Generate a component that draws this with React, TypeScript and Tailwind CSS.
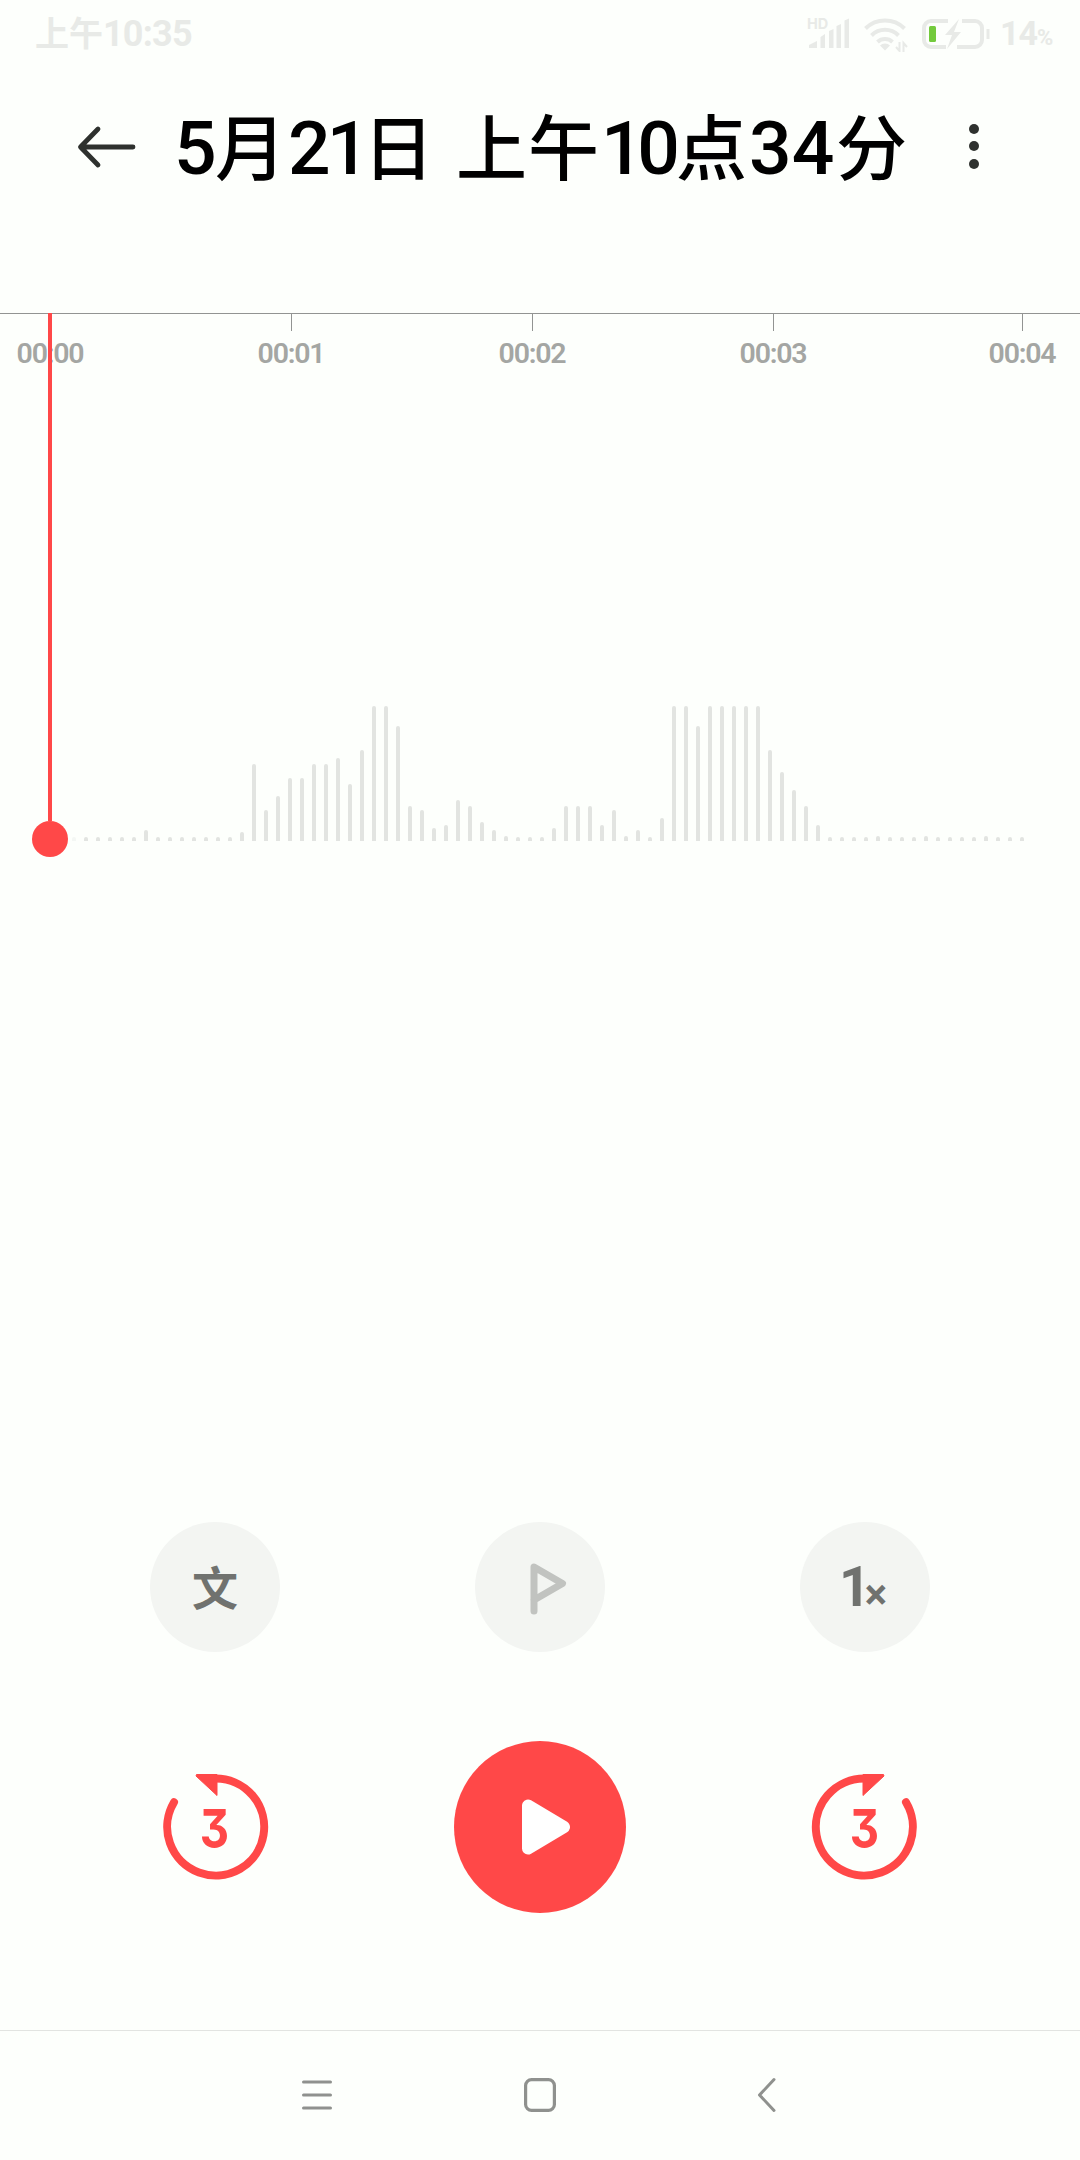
import { useState } from 'react';

const TICKS = [
  { label: '00:00', width: 'w-[100px]', mark: false },
  { label: '00:01', width: 'w-[382px]', mark: true },
  { label: '00:02', width: 'w-[100px]', mark: true },
  { label: '00:03', width: 'w-[382px]', mark: true },
  { label: '00:04', width: 'w-[116px]', mark: true },
];

// one sample every 12px, clipped at 135
const LEVELS = [
  4, 4, 4, 4, 4, 4, 11, 4, 4, 4, 4, 4, 4, 4, 9, 77, 31, 45, 63, 63, 77, 77, 83, 57, 91, 135, 135, 115, 35,
  31, 13, 16, 41, 35, 19, 11, 5, 4, 4, 4, 13, 35, 35, 35, 16, 31, 5, 11, 4, 23, 135, 135, 115,
  135, 135, 135, 135, 135, 91, 69, 51, 35, 16, 4, 4, 4, 4, 5, 4, 4, 4, 5, 4, 4, 4, 4, 5, 4, 4, 4,
];

function StatusBar() {
  return (
    <div className="flex h-[68px] items-center pl-[35px] text-[#e8eae7]">
      <span className="mt-[-2px] flex items-baseline leading-none font-bold">
        <span className="text-[34px]">上午</span>
        <span className="font-[Roboto] text-[36px] tracking-[-0.8px]">10:35</span>
      </span>
      <div className="ml-auto flex w-[273px] items-center">
        <svg width="44" height="36" viewBox="806 15 44 36" fill="currentColor">
          <text x="806" y="27.5" fontSize="14.5" fontWeight="700" fontFamily="Inter, sans-serif">HD</text>
          <path d="M808 47v-3l8-4v7zM819.500 47V36l4.500-3v14zM828 47V30l4.500-2v19zM835.500 47V25l4.500-2v24zM843.500 47V19.500l4.500-2V47z" />
        </svg>
        <svg className="ml-[12px]" width="46" height="36" viewBox="863 15 46 36" fill="none" stroke="currentColor" strokeWidth="4">
          <path d="M865.500 27.500a28 28 0 0 1 39 0M871.500 34.500a19 19 0 0 1 27 0M877.500 41a11 11 0 0 1 15 0" />
          <path d="M880 44.500a7 7 0 0 1 10 0l-5 5z" fill="currentColor" stroke="none" />
          <path d="M899.500 41v9l-3.500-4M903.500 51v-9l3.500 4" strokeWidth="2" />
        </svg>
        <svg className="ml-[11px]" width="72" height="36" viewBox="920 15 72 36" fill="none" stroke="currentColor" strokeWidth="4">
          <path d="M948 20h-17a7 7 0 0 0-7 7v12a7 7 0 0 0 7 7h15M962 20h13a7 7 0 0 1 7 7v12a7 7 0 0 1-7 7h-18" />
          <path d="M988 28v10" strokeWidth="3" />
          <path d="M959 18l-14 16h7l-5 14 14-17h-7z" fill="currentColor" stroke="none" />
          <rect x="929" y="25" width="7" height="16" rx="1.500" fill="#73ca3c" stroke="none" />
        </svg>
        <span className="mt-[-2px] ml-[8px] flex items-baseline font-[Roboto] leading-none font-bold">
          <span className="text-[34px] tracking-[-1px]">14</span>
          <span className="text-[22px]">%</span>
        </span>
      </div>
    </div>
  );
}

function Header() {
  return (
    <header className="flex h-[160px] items-center pb-[4px] text-[#2e312e]">
      <button className="ml-[74px]" aria-label="返回">
        <svg width="64" height="48" viewBox="0 0 64 48" fill="none" stroke="currentColor" strokeWidth="4.800" strokeLinecap="round" strokeLinejoin="round">
          <path d="M59 25H7M24 7 6.500 25 24 43" />
        </svg>
      </button>
      <h1 className="mt-[1px] ml-[36px] flex w-[761px] items-baseline text-[71px] leading-none font-medium whitespace-pre text-black">
        <span className="w-[41px] font-[Roboto] text-[75px] tracking-[-1px]">5</span>
        <span className="w-[73px]">月</span>
        <span className="w-[75px] font-[Roboto] text-[75px] tracking-[-4px]">21</span>
        <span className="w-[93px]">日 </span>
        <span className="w-[145px] tracking-[1px]">上午</span>
        <span className="w-[75px] font-[Roboto] text-[75px] tracking-[-6.500px]">10</span>
        <span className="w-[73px]">点</span>
        <span className="w-[87px] font-[Roboto] text-[75px]">34</span>
        <span>分</span>
      </h1>
      <button className="ml-[34px] flex flex-col gap-[7.500px]" aria-label="更多">
        <i className="size-[10px] rounded-full bg-current" />
        <i className="size-[10px] rounded-full bg-current" />
        <i className="size-[10px] rounded-full bg-current" />
      </button>
    </header>
  );
}

function Timeline() {
  return (
    <section className="relative mt-[85px] h-[1209px]">
      <div className="flex border-t border-[#929492]">
        {TICKS.map(t => (
          <div key={t.label} className={`flex shrink-0 flex-col items-center ${t.width}`}>
            <i className={`h-[17px] w-px ${t.mark ? 'bg-[#929492]' : 'bg-transparent'}`} />
            <span className="mt-[8px] font-[Roboto] text-[28.500px] leading-[29px] font-semibold tracking-[-1.2px] text-[#a4a6a3]">{t.label}</span>
          </div>
        ))}
      </div>
      <div className="mt-[337px] flex h-[136px] items-end gap-2 pl-[72px]">
        {LEVELS.map((h, i) => (
          <i key={i} className="w-1 shrink-0 rounded-t-[2px] bg-[#e2e4e1] first:opacity-30" style={{ height: h }} />
        ))}
      </div>
      <div className="absolute top-0 left-[32px] flex flex-col items-center text-[#ff4848]">
        <i className="h-[508px] w-1 bg-current" />
        <i className="size-[36px] rounded-full bg-current" />
      </div>
    </section>
  );
}

function SkipIcon({ forward = false }: { forward?: boolean }) {
  return (
    <span className="grid size-[130px] place-items-center text-[#ff4848]">
      <svg className={`col-start-1 row-start-1 ${forward ? '-scale-x-100' : ''}`} width="110" height="110" viewBox="0 0 110 110" fill="none">
        <path d="M14 30.200A48.500 48.500 0 1 0 55 6.500" stroke="currentColor" strokeWidth="8" strokeLinecap="round" />
        <path d="M36.500 2.500H57V23.500L36 4z" fill="currentColor" stroke="currentColor" strokeWidth="1" strokeLinejoin="round" />
      </svg>
      <span className="col-start-1 row-start-1 mt-[4px] mr-[1px] scale-x-[0.84] font-[Inter] text-[54px] leading-none font-bold [font-feature-settings:'cv09']">
        3
      </span>
    </span>
  );
}

export default function App() {
  const [playing, setPlaying] = useState(false);

  return (
    <div className="flex h-[2160px] w-[1080px] flex-col overflow-hidden bg-[#fdfffc] font-['Noto_Sans_CJK_SC',sans-serif]">
      <StatusBar />
      <Header />
      <Timeline />

      <div className="flex justify-between px-[150px]">
        <button className="flex size-[130px] items-center justify-center rounded-full bg-[#f3f5f2] pb-[5px] text-[46px] leading-none font-bold text-[#70726f]">
          文
        </button>
        <button className="flex size-[130px] items-center justify-center rounded-full bg-[#f3f5f2]" aria-label="标记">
          <svg width="60" height="60" viewBox="0 0 60 60" fill="none" stroke="#c1c3c0" strokeWidth="7" strokeLinecap="round" strokeLinejoin="round">
            <path d="M24 54V10L52.500 26.500 24 43" />
          </svg>
        </button>
        <button className="flex size-[130px] items-baseline justify-center rounded-full bg-[#f3f5f2] pt-[38px] pr-[4px] font-[Roboto] leading-none font-bold text-[#70726f]">
          <span className="text-[55px] leading-[55px] tracking-[-6px]">1</span>
          <span className="translate-y-[3px] text-[42px] leading-[42px]">×</span>
        </button>
      </div>

      <div className="mt-[89px] flex items-center justify-between px-[150px]">
        <button aria-label="后退3秒"><SkipIcon /></button>
        <button
          onClick={() => setPlaying(p => !p)}
          aria-label={playing ? '暂停' : '播放'}
          className="flex size-[172px] items-center justify-center rounded-full bg-[#ff4848]"
        >
          <svg className="ml-[12px]" width="50" height="56" viewBox="0 0 50 56" fill="#fff" stroke="#fff" strokeWidth="12" strokeLinejoin="round">
            <path d="M7 6.500v43L43 28z" />
          </svg>
        </button>
        <button aria-label="前进3秒"><SkipIcon forward /></button>
      </div>

      <nav className="mt-auto flex h-[130px] items-center justify-center border-t border-[#e2e4e1] pb-[2px] pl-[2px] text-[#8f918e]">
        <svg width="34" height="38" viewBox="0 0 34 38" fill="none" stroke="currentColor" strokeWidth="3" strokeLinecap="round">
          <path d="M3.500 6H30.500M3.500 19H30.500M3.500 32H30.500" />
        </svg>
        <svg className="mr-[190px] ml-[187px]" width="38" height="38" viewBox="0 0 38 38" fill="none" stroke="currentColor" strokeWidth="3.200">
          <rect x="4.600" y="3.600" width="28.800" height="30.800" rx="6" />
        </svg>
        <svg width="34" height="38" viewBox="0 0 34 38" fill="none" stroke="currentColor" strokeWidth="3" strokeLinecap="round" strokeLinejoin="round">
          <path d="M25 3.500 10.500 19 25 34.500" />
        </svg>
      </nav>
    </div>
  );
}
